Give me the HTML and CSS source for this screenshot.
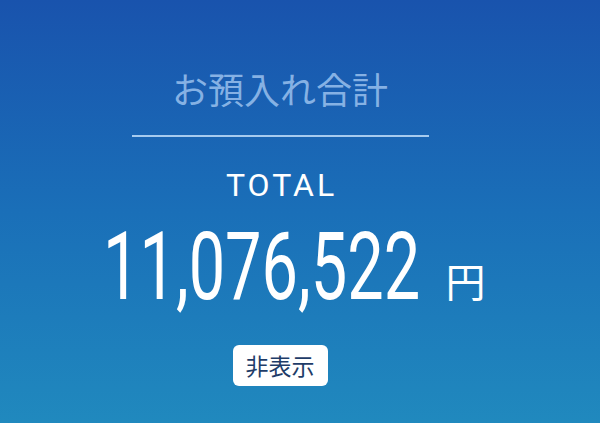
FILE: index.html
```html
<!DOCTYPE html>
<html lang="ja">
<head>
<meta charset="utf-8">
<link rel="stylesheet" href="styles.css">
</head>
<body>
<main class="panel">
  <h1 class="title">お預入れ合計</h1>
  <div class="rule"></div>
  <p class="label">TOTAL</p>
  <div class="amount-row">
    <div class="amount"><span class="digits">11,076,522</span></div>
    <span class="unit">円</span>
  </div>
  <button class="toggle">非表示</button>
</main>
</body>
</html>
```

FILE: styles.css
```css
html, body {
  margin: 0;
  padding: 0;
}
body {
  width: 600px;
  height: 423px;
  overflow: hidden;
  background: linear-gradient(180deg, #1953ad 0%, #1a6fb8 50%, #2089be 100%);
  font-family: "Noto Sans CJK JP", "Noto Sans", sans-serif;
}
.panel {
  display: flex;
  flex-direction: column;
  align-items: center;
  padding-right: 40px;
  box-sizing: border-box;
  height: 423px;
}
.title {
  margin: 61px 0 0;
  font-size: 36px;
  line-height: 54px;
  font-weight: 400;
  color: rgba(170, 205, 245, 0.76);
  letter-spacing: 0;
}
.rule {
  width: 297px;
  height: 2px;
  margin-top: 20px;
  background: #a6cbef;
}
.label {
  margin: 28px 0 0;
  font-family: Roboto, "Noto Sans", sans-serif;
  font-size: 32px;
  line-height: 40px;
  font-weight: 400;
  letter-spacing: 3px;
  color: #ffffff;
  padding-left: 3px;
}
.amount-row {
  display: flex;
  align-items: baseline;
  margin-top: 19px;
  margin-left: 28px;
  height: 86px;
}
.amount {
  width: 316px;
  font-family: Roboto, "Noto Sans", sans-serif;
  font-weight: 400;
  font-size: 94px;
  line-height: 86px;
  color: #ffffff;
  white-space: nowrap;
}
.digits {
  display: inline-block;
  transform: scaleX(0.69);
  transform-origin: left center;
}
.unit {
  position: relative;
  top: -2px;
  margin-left: 27px;
  font-size: 40px;
  font-weight: 400;
  color: #ffffff;
  line-height: 1;
}
.toggle {
  margin-top: 35px;
  width: 95px;
  height: 41px;
  border: none;
  border-radius: 6px;
  background: #ffffff;
  color: #1e3c68;
  font-family: "Noto Sans CJK JP", "Noto Sans", sans-serif;
  font-size: 23px;
  line-height: 41px;
  padding: 0;
}
```
